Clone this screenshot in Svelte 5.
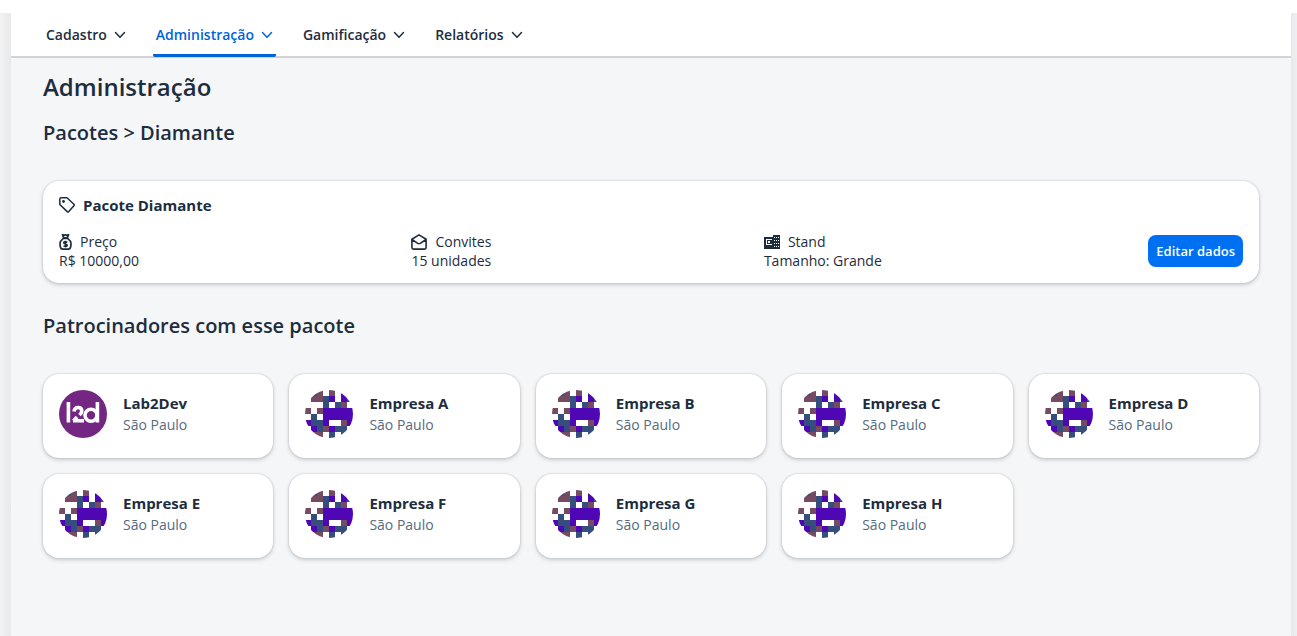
<script>
  const menu = [
    { label: 'Cadastro' },
    { label: 'Administração', active: true },
    { label: 'Gamificação' },
    { label: 'Relatórios' }
  ];
  const sponsors = ['Lab2Dev', ...'ABCDEFGH'.split('').map((c) => `Empresa ${c}`)];

  // b = brown, n = navy, p = purple, . = white
  const pattern = [
    '.nb.b.p.',
    '.bbnp.pn',
    '...n.nb.',
    'b.bppppp',
    '.n.ppppp',
    'pnnp..bp',
    '.pnbpnn.',
    '.bb.n.n.'
  ];
  const colors = { b: '#754b63', n: '#354e7d', p: '#4f06b5', '.': '#ffffff' };
</script>

<div class="page">
  <div class="shell">
    <nav>
      {#each menu as item}
        <button class="tab" class:active={item.active}>
          {item.label}
          <svg width="12" height="8" viewBox="0 0 12 8" fill="none" stroke="currentColor" stroke-width="1.5" stroke-linecap="round" stroke-linejoin="round"><path d="M1.5 1.5 6 6.2 10.5 1.5" /></svg>
        </button>
      {/each}
    </nav>

    <main>
      <h1>Administração</h1>
      <h2>Pacotes &gt; Diamante</h2>

      <section class="card package">
        <h3>
          <svg width="16" height="16" viewBox="0 0 16 16" fill="none" stroke="currentColor" stroke-width="1.5" stroke-linejoin="round"><path d="M.8 2.2Q.8.8 2.2.8H8L14.9 7.2Q15.6 8 14.9 8.8L9.8 14.6Q9 15.4 8.2 14.6L.8 7.5Z" /><circle cx="4.5" cy="4.5" r="1.4" fill="currentColor" stroke="none" /></svg>
          Pacote Diamante
        </h3>
        <div class="facts">
          <div class="fact">
            <div class="term">
              <svg width="13" height="16" viewBox="0 0 13 16" fill="none" stroke="currentColor" stroke-width="1.7" stroke-linejoin="round"><path d="M3.5.6 4.6 3.8H8.4L9.5.6 7.6 1.4 6.5.7 5.4 1.4ZM4.2 4.5H8.8L11.6 7.5Q12.4 11 11.4 13.6 10.8 15.2 9 15.2H4Q2.2 15.2 1.6 13.6.6 11 1.4 7.5Z" /><path d="M8.4 8.2Q4.8 7.2 4.8 8.9C4.8 10.2 8.2 9.7 8.2 11.3Q8.2 12.9 4.5 12M6.5 6.8V13.6" /></svg>
              Preço
            </div>
            <div>R$ 10000,00</div>
          </div>
          <div class="fact">
            <div class="term">
              <svg width="16" height="16" viewBox="0 0 16 16" fill="none" stroke="currentColor" stroke-width="1.6" stroke-linejoin="round"><path d="M.9 5.3 8 .9 15.1 5.3V13.5Q15.1 15.1 13.5 15.1H2.5Q.9 15.1.9 13.5ZM.9 5.5 6.8 9.4Q8 10.1 9.2 9.4L15.1 5.5" /></svg>
              Convites
            </div>
            <div>15 unidades</div>
          </div>
          <div class="fact">
            <div class="term">
              <svg width="16" height="16" viewBox="0 0 16 16"><path fill="currentColor" d="M0 3H9V1H16V15H0Z" /><path fill="#fff" d="M2 5H8V6H3V10H8V11H2ZM4 7H6V9H4ZM10 3h1v1h-1ZM12 3h1v1h-1ZM14 3h1v1h-1ZM10 6h1v1h-1ZM12 6h1v1h-1ZM14 6h1v1h-1ZM10 9h1v1h-1ZM12 9h1v1h-1ZM14 9h1v1h-1ZM10 12h1v1h-1ZM12 12h1v1h-1ZM14 12h1v1h-1Z" /></svg>
              Stand
            </div>
            <div>Tamanho: Grande</div>
          </div>
          <button class="edit">Editar dados</button>
        </div>
      </section>

      <h2>Patrocinadores com esse pacote</h2>

      <ul class="sponsors">
        {#each sponsors as name, i}
          <li class="card sponsor">
            {#if i === 0}
              <svg class="avatar" viewBox="0 0 48 48"><rect width="48" height="48" fill="#732783" /><g fill="none" stroke="#fff" stroke-width="3.6"><path d="M9.4 12V32.5M38.4 12V32.5" /><path d="M15 21.5Q15.5 17.5 19 17.5 22.8 17.5 22.8 21 22.8 23 20.5 25M14 30.7H25M18 27 14.5 31" /><circle cx="32" cy="25.2" r="6" /></g></svg>
            {:else}
              <svg class="avatar" viewBox="0 0 8 8" shape-rendering="crispEdges">
                {#each pattern as row, y}
                  {#each row.split('') as cell, x}
                    <rect {x} {y} width="1" height="1" fill={colors[cell]} />
                  {/each}
                {/each}
              </svg>
            {/if}
            <div>
              <div class="name">{name}</div>
              <div class="city">São Paulo</div>
            </div>
          </li>
        {/each}
      </ul>
    </main>
  </div>
</div>

<style>
  :global(body) {
    margin: 0;
    background: #fff;
  }
  .page {
    box-sizing: border-box;
    min-height: 100vh;
    padding-top: 13px;
    display: flex;
    font-family: 'Open Sans', sans-serif;
    font-size: 14px;
    line-height: 19px;
    color: #1d2d3e;
  }
  .page::before,
  .page::after {
    content: '';
    width: 11px;
    background: linear-gradient(90deg, #f1f2f3, #e8e9eb);
  }
  .page::after {
    width: 6px;
    background: linear-gradient(90deg, #e8e9eb, #eeeff1);
  }
  .shell {
    flex: 1;
    background: #f5f6f7;
  }
  nav {
    display: flex;
    gap: 24px;
    padding: 0 32px;
    height: 43px;
    background: #fff;
    border-bottom: 2px solid #d3d3d3;
  }
  .tab {
    height: 44px;
    display: flex;
    align-items: center;
    gap: 7px;
    padding: 2px 3px 0;
    border: 0;
    border-bottom: 3px solid transparent;
    background: none;
    font: 600 14px 'Open Sans', sans-serif;
    color: inherit;
  }
  .tab.active {
    color: #0064d9;
    border-color: #0064d9;
    border-radius: 2px;
  }
  main {
    padding: 13px 32px 32px;
  }
  h1,
  h2,
  h3 {
    margin: 0;
    font-weight: 600;
  }
  h1 {
    font-size: 24px;
    line-height: 32px;
  }
  h2 {
    margin: 17px 0 35px;
    font-size: 20px;
    line-height: 26px;
  }
  .card {
    background: #fff;
    border-radius: 16px;
    box-shadow: 0 0 2px rgb(34 53 72 / 25%), 0 2px 4px rgb(34 53 72 / 20%);
  }
  .package {
    padding: 14px 16px 13px;
    margin-bottom: 30px;
  }
  h3 {
    display: flex;
    align-items: center;
    gap: 8px;
    font-size: 15px;
    font-weight: 700;
    line-height: 20px;
    margin-bottom: 17px;
  }
  .facts {
    display: grid;
    grid-template-columns: 1fr 1fr 1fr auto;
  }
  .term {
    display: flex;
    align-items: center;
    gap: 8px;
  }
  .edit {
    align-self: center;
    height: 32px;
    margin-left: 32px;
    padding: 0 8px;
    border: 0;
    border-radius: 8px;
    background: #0070f2;
    color: #fff;
    font: 600 13px 'Open Sans', sans-serif;
  }
  .sponsors {
    list-style: none;
    margin: 0;
    padding: 0;
    display: grid;
    grid-template-columns: repeat(5, 1fr);
    gap: 16px;
  }
  .sponsor {
    display: flex;
    gap: 16px;
    padding: 16px 16px 20px;
  }
  .avatar {
    width: 48px;
    height: 48px;
    border-radius: 50%;
  }
  .name {
    margin-top: 2px;
    font-size: 15px;
    line-height: 23px;
    font-weight: 700;
  }
  .city {
    color: #556b82;
  }
</style>
